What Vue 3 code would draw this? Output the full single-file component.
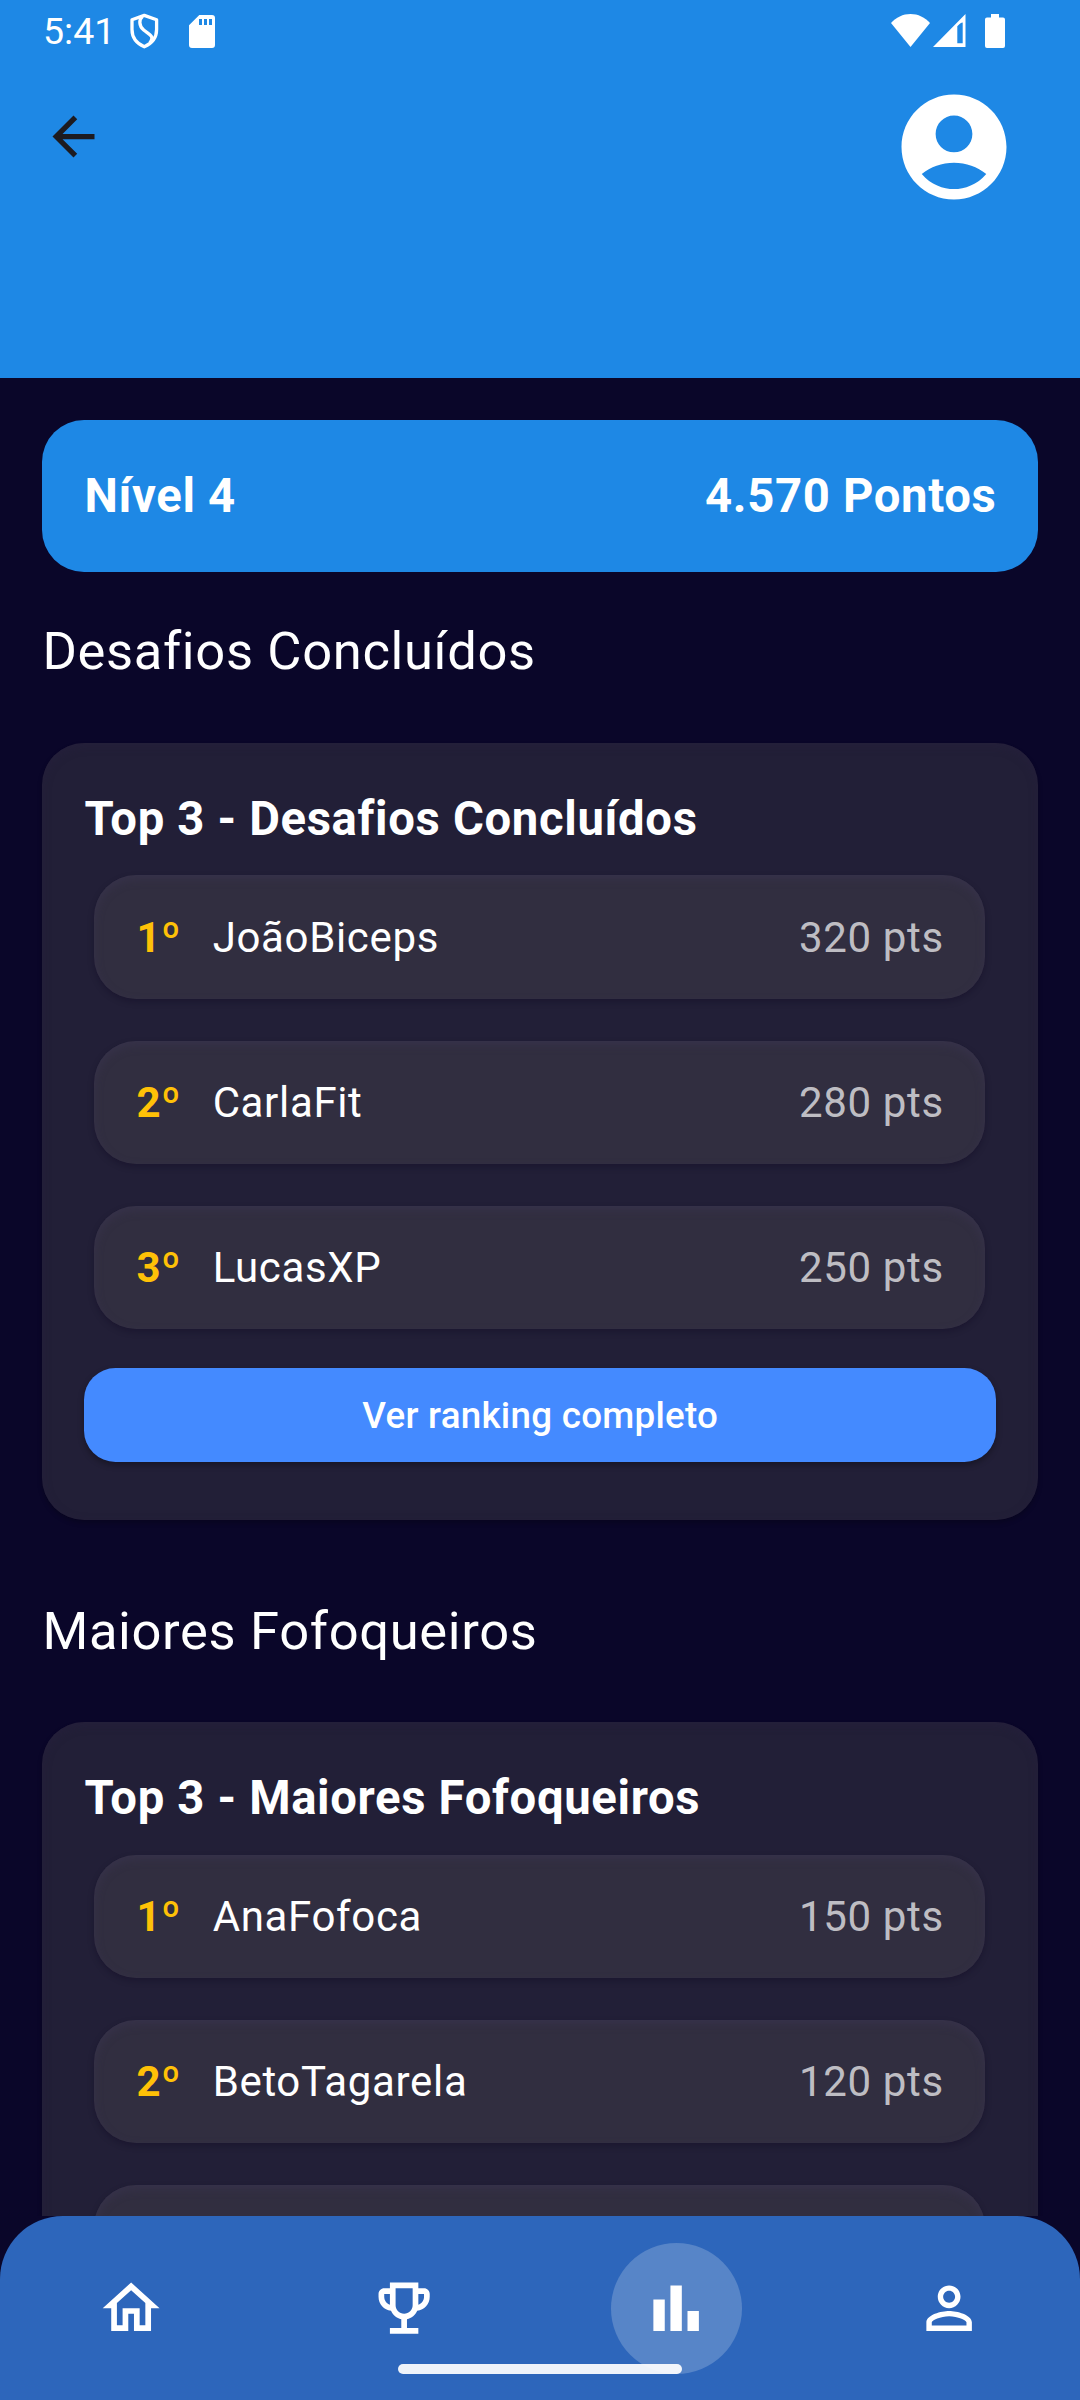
<script setup>
const sections = [
  {
    heading: 'Desafios Concluídos',
    title: 'Top 3 - Desafios Concluídos',
    rows: [
      { rank: '1º', name: 'JoãoBiceps', points: 320 },
      { rank: '2º', name: 'CarlaFit', points: 280 },
      { rank: '3º', name: 'LucasXP', points: 250 },
    ],
  },
  {
    heading: 'Maiores Fofoqueiros',
    title: 'Top 3 - Maiores Fofoqueiros',
    rows: [
      { rank: '1º', name: 'AnaFofoca', points: 150 },
      { rank: '2º', name: 'BetoTagarela', points: 120 },
      { rank: '3º', name: '', points: null },
    ],
  },
]

const tabs = [
  {
    id: 'home',
    path: 'M12 5.69l5 4.5V18h-2v-6H9v6H7v-7.81l5-4.5M12 3L2 12h3v8h6v-6h2v6h6v-8h3L12 3z',
  },
  {
    id: 'trophy',
    path: 'M19 5h-2V3H7v2H5c-1.1 0-2 .9-2 2v1c0 2.55 1.92 4.63 4.39 4.94.63 1.5 1.98 2.63 3.61 2.96V19H7v2h10v-2h-4v-3.1c1.63-.33 2.98-1.46 3.61-2.96C19.08 12.63 21 10.55 21 8V7c0-1.1-.9-2-2-2zM5 8V7h2v3.82C5.84 10.4 5 9.3 5 8zm7 6c-1.65 0-3-1.35-3-3V5h6v6c0 1.65-1.35 3-3 3zm7-6c0 1.3-.84 2.4-2 2.82V7h2v1z',
  },
  { id: 'ranking', active: true, path: 'M4 9h4v11H4zM16 13h4v7h-4zM10 4h4v16h-4z' },
  {
    id: 'profile',
    path: 'M12 5.9c1.16 0 2.1.94 2.1 2.1s-.94 2.1-2.1 2.1S9.9 9.16 9.9 8s.94-2.1 2.1-2.1m0 9c2.97 0 6.1 1.46 6.1 2.1v1.1H5.9V17c0-.64 3.13-2.1 6.1-2.1M12 4C9.79 4 8 5.79 8 8s1.79 4 4 4 4-1.79 4-4-1.79-4-4-4zm0 9c-2.67 0-8 1.34-8 4v3h16v-3c0-2.66-5.33-4-8-4z',
  },
]
</script>

<template>
  <div class="screen">
    <header class="header">
      <div class="status">
        <span class="time">5:41</span>
        <svg class="shield" width="30" height="36" viewBox="0 0 30 36" fill="none" stroke="#fff" stroke-width="3.3" stroke-linejoin="round">
          <path d="M15.3 2.4L27.6 6.8V16.5C27.6 24.5 22.6 30.6 15.3 33.8C8 30.6 3 24.5 3 16.5V6.8Z" />
          <path d="M13.5 3.5C9.8 6.5 9.8 13 14.7 17C20.5 21.6 26 23 20.8 30" />
        </svg>
        <svg class="sd" width="26" height="33" viewBox="0 0 26 33">
          <path fill="#fff" fill-rule="evenodd" d="M10.3 0H23a3 3 0 0 1 3 3V30a3 3 0 0 1-3 3H3a3 3 0 0 1-3-3V10.3ZM10 4V10H13V4ZM15 4V10H18V4ZM20 4V10H23V4Z" />
        </svg>
        <span class="spacer"></span>
        <svg class="wifi" width="39" height="33" viewBox="0 0 39 33">
          <path fill="#fff" d="M19.5 33L0 9C5 3.4 12 0 19.5 0S34 3.4 39 9Z" />
        </svg>
        <svg class="signal" width="33" height="33" viewBox="0 0 33 33">
          <path fill="#fff" fill-rule="evenodd" d="M32.5 0V33H0ZM24.3 12.3V29.3H29.7V8.4Q27.4 8.6 24.3 12.3Z" />
        </svg>
        <svg class="battery" width="20" height="34" viewBox="0 0 20 34">
          <path fill="#fff" d="M6 0h8v3.5h4a2 2 0 0 1 2 2V32a2 2 0 0 1-2 2H2a2 2 0 0 1-2-2V5.500a2 2 0 0 1 2-2h4Z" />
        </svg>
      </div>
      <div class="toolbar">
        <svg class="back" width="63" height="63" viewBox="0 0 24 24">
          <path fill="#1d1b20" d="M20 11H7.83l5.59-5.590L12 4l-8 8 8 8 1.410-1.410L7.830 13H20v-2z" />
        </svg>
        <svg class="avatar" width="126" height="126" viewBox="0 0 24 24">
          <path fill="#fff" d="M12 2C6.48 2 2 6.48 2 12s4.480 10 10 10 10-4.480 10-10S17.520 2 12 2zM12 6c1.930 0 3.500 1.570 3.500 3.500S13.930 13 12 13s-3.500-1.570-3.500-3.500S10.070 6 12 6zM12 20c-2.030 0-4.430-.820-6.140-2.880C7.550 15.800 9.680 15 12 15s4.450.800 6.140 2.120C16.430 19.180 14.030 20 12 20z" />
        </svg>
      </div>
    </header>

    <main class="content">
      <div class="summary">
        <span>Nível 4</span>
        <span>4.570 Pontos</span>
      </div>
      <section v-for="section in sections" :key="section.heading" class="section">
        <h2 class="heading">{{ section.heading }}</h2>
        <div class="card">
          <h3 class="title">{{ section.title }}</h3>
          <ul class="rows">
            <li v-for="row in section.rows" :key="row.rank" class="row">
              <template v-if="row.name">
                <span class="rank">{{ row.rank }}</span>
                <span class="name">{{ row.name }}</span>
                <span class="points">{{ row.points }} pts</span>
              </template>
            </li>
          </ul>
          <button v-if="section === sections[0]" class="more" type="button">Ver ranking completo</button>
        </div>
      </section>
    </main>

    <nav class="tabs">
      <span v-for="tab in tabs" :key="tab.id" class="tab" :class="{ active: tab.active }">
        <svg width="68.25" height="68.25" viewBox="0 0 24 24"><path fill="#fff" :d="tab.path" /></svg>
      </span>
      <span class="indicator"></span>
    </nav>
  </div>
</template>

<style>
body {
  margin: 0;
  background: #0a0629;
}
</style>

<style scoped>
.screen {
  display: flex;
  flex-direction: column;
  width: 1080px;
  height: 2400px;
  overflow: hidden;
  background: #0a0629;
  color: #fff;
  font-family: Roboto, "Liberation Sans", sans-serif;
  letter-spacing: 0.656px;
  line-height: 1.43;
}
.header {
  flex: none;
  height: 378px;
  background: #1e88e5;
}
.status {
  display: flex;
  align-items: flex-start;
  height: 84px;
  padding: 0 75px 0 43px;
  box-sizing: border-box;
}
.time {
  width: 86px;
  margin-top: 9px;
  font-size: 37.5px;
  line-height: 44px;
  letter-spacing: 0;
}
.shield { margin-top: 13px; }
.sd { margin: 15px 0 0 30px; }
.spacer { flex: 1; }
.wifi { margin-top: 14px; }
.signal { margin: 14px 0 0 3px; }
.battery { margin: 14px 0 0 19px; }
.toolbar {
  display: flex;
  justify-content: space-between;
  padding: 0 63px 0 42px;
}
.back { margin-top: 21px; }
.content {
  flex: none;
  height: 1838px;
  padding: 42px 42px 0;
  box-sizing: border-box;
  overflow: hidden;
}
.summary {
  display: flex;
  justify-content: space-between;
  padding: 42px 41.5px 42px 42.5px;
  border-radius: 42px;
  background: #1e88e5;
  font-size: 47.25px;
  font-weight: 700;
  line-height: 68px;
}
.heading {
  margin: 0;
  padding: 42px 0 54px 0.4px;
  font-size: 52.5px;
  font-weight: 400;
  line-height: 75px;
}
.section + .section .heading {
  padding-top: 74px;
  padding-bottom: 53.4px;
}
.card {
  height: 777px;
  padding: 42px;
  box-sizing: border-box;
  border-radius: 42px;
  background: #221f37;
  box-shadow: 0 3px 5px rgba(0, 0, 0, 0.22), inset 0 3px 8px rgba(40, 32, 64, 0.5);
}
.title {
  margin: 0;
  padding-left: 0.4px;
  font-size: 47.25px;
  font-weight: 700;
  line-height: 68px;
}
.rows {
  display: flex;
  flex-direction: column;
  gap: 42px;
  margin: 22.2px 11px 38.7px 10px;
  padding: 0;
  list-style: none;
}
.row {
  display: flex;
  align-items: center;
  height: 123.375px;
  padding: 1.5px 41.2px 0 42.5px;
  box-sizing: border-box;
  border-radius: 42px;
  background: #312e40;
  box-shadow: 0 3px 6px rgba(10, 4, 30, 0.28), inset 0 4px 10px rgba(62, 56, 86, 0.45);
  font-size: 42px;
  line-height: 60px;
}
.rank {
  margin-right: 31.5px;
  color: #ffc107;
  font-weight: 700;
}
.name { flex: 1; }
.points { color: rgba(255, 255, 255, 0.7); }
.more {
  display: block;
  width: 100%;
  height: 94px;
  padding: 2px 0 0 0.5px;
  border: 0;
  border-radius: 31.5px;
  background: #448aff;
  box-shadow: 0 3px 6px rgba(0, 0, 0, 0.32);
  color: #fff;
  font: 500 36.75px/52px Roboto, "Liberation Sans", sans-serif;
  letter-spacing: 0.2625px;
}
.tabs {
  position: relative;
  display: flex;
  flex: none;
  justify-content: space-between;
  height: 184px;
  padding: 26.5px 65.6px 0;
  box-sizing: border-box;
  border-radius: 63px 63px 0 0;
  background: #2d66bb;
}
.tab {
  display: flex;
  align-items: center;
  justify-content: center;
  width: 131.25px;
  height: 131.25px;
  border-radius: 50%;
}
.tab.active { background: #5785c8; }
.indicator {
  position: absolute;
  bottom: 26px;
  left: 398px;
  width: 284px;
  height: 10px;
  border-radius: 5px;
  background: rgba(255, 255, 255, 0.92);
}
</style>
